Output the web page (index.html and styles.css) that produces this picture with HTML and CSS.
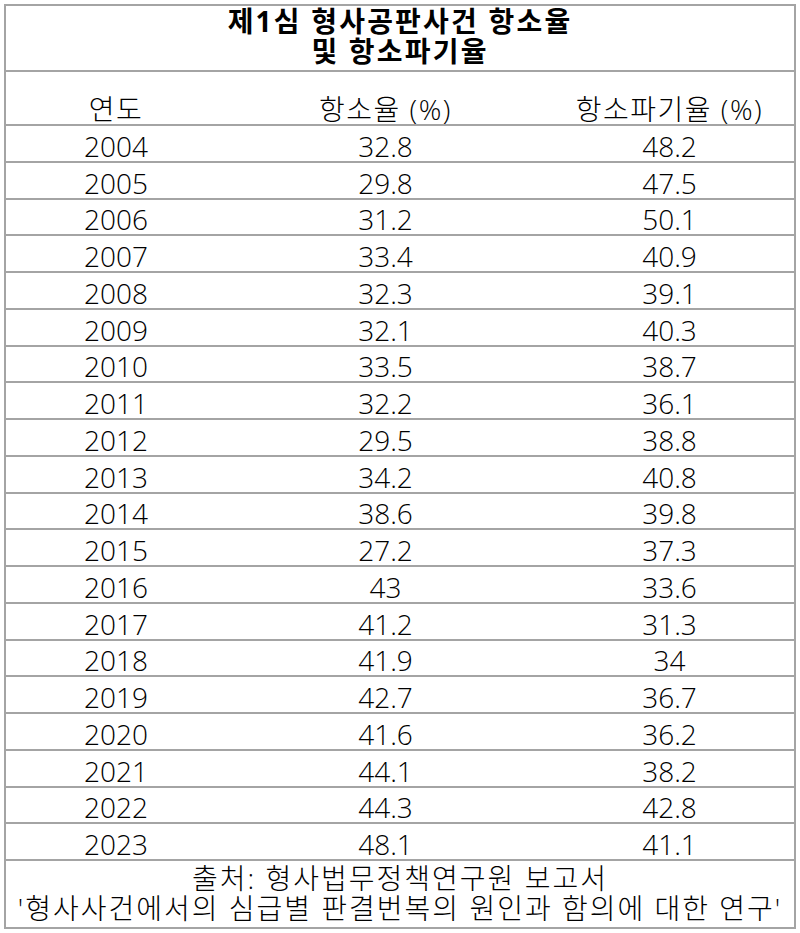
FILE: index.html
```html
<!DOCTYPE html>
<html lang="ko">
<head>
<meta charset="utf-8">
<title>제1심 형사공판사건 항소율 및 항소파기율</title>
<link rel="stylesheet" href="styles.css">
</head>
<body>
<div class="sheet">
  <div class="title">제1심 형사공판사건 항소율<br>및 항소파기율</div>
  <div class="row head"><span class="c1">연도</span><span class="c2">항소율 (%)</span><span class="c3">항소파기율 (%)</span></div>
  <div class="row"><span class="c1">2004</span><span class="c2">32.8</span><span class="c3">48.2</span></div>
  <div class="row"><span class="c1">2005</span><span class="c2">29.8</span><span class="c3">47.5</span></div>
  <div class="row"><span class="c1">2006</span><span class="c2">31.2</span><span class="c3">50.1</span></div>
  <div class="row"><span class="c1">2007</span><span class="c2">33.4</span><span class="c3">40.9</span></div>
  <div class="row"><span class="c1">2008</span><span class="c2">32.3</span><span class="c3">39.1</span></div>
  <div class="row"><span class="c1">2009</span><span class="c2">32.1</span><span class="c3">40.3</span></div>
  <div class="row"><span class="c1">2010</span><span class="c2">33.5</span><span class="c3">38.7</span></div>
  <div class="row"><span class="c1">2011</span><span class="c2">32.2</span><span class="c3">36.1</span></div>
  <div class="row"><span class="c1">2012</span><span class="c2">29.5</span><span class="c3">38.8</span></div>
  <div class="row"><span class="c1">2013</span><span class="c2">34.2</span><span class="c3">40.8</span></div>
  <div class="row"><span class="c1">2014</span><span class="c2">38.6</span><span class="c3">39.8</span></div>
  <div class="row"><span class="c1">2015</span><span class="c2">27.2</span><span class="c3">37.3</span></div>
  <div class="row"><span class="c1">2016</span><span class="c2">43</span><span class="c3">33.6</span></div>
  <div class="row"><span class="c1">2017</span><span class="c2">41.2</span><span class="c3">31.3</span></div>
  <div class="row"><span class="c1">2018</span><span class="c2">41.9</span><span class="c3">34</span></div>
  <div class="row"><span class="c1">2019</span><span class="c2">42.7</span><span class="c3">36.7</span></div>
  <div class="row"><span class="c1">2020</span><span class="c2">41.6</span><span class="c3">36.2</span></div>
  <div class="row"><span class="c1">2021</span><span class="c2">44.1</span><span class="c3">38.2</span></div>
  <div class="row"><span class="c1">2022</span><span class="c2">44.3</span><span class="c3">42.8</span></div>
  <div class="row"><span class="c1">2023</span><span class="c2">48.1</span><span class="c3">41.1</span></div>
  <div class="footer">출처: 형사법무정책연구원 보고서<br>'형사사건에서의 심급별 판결번복의 원인과 함의에 대한 연구'</div>
</div>
</body>
</html>
```
FILE: styles.css
```css
html, body {
  margin: 0;
  padding: 0;
  background: #ffffff;
}

body {
  font-family: "Open Sans", "Noto Sans", "Noto Sans CJK KR", sans-serif;
  font-size: 28px;
  font-weight: 300;
  color: #000000;
}

.sheet {
  box-sizing: border-box;
  width: 792px;
  height: 925px;
  margin: 4px;
  border: 2px solid #a4a4a4;
  display: flex;
  flex-direction: column;
}

.title {
  box-sizing: border-box;
  height: 66px;
  border-bottom: 2px solid #a4a4a4;
  text-align: center;
  font-weight: bold;
  line-height: 30px;
  letter-spacing: 2.2px;
  white-space: nowrap;
}

.row {
  box-sizing: border-box;
  height: 36.75px;
  border-bottom: 2px solid #a4a4a4;
  display: flex;
  align-items: center;
  padding-top: 5px;
  line-height: 30px;
  white-space: nowrap;
}

.row.head {
  height: 54px;
  align-items: flex-end;
  padding-top: 0;
  padding-bottom: 0;
  letter-spacing: 1.5px;
}

.c1, .c2, .c3 {
  display: block;
  text-align: center;
}

.c1 { width: 220px; flex: none; }
.c2 { width: 319px; flex: none; }
.c3 { flex: 1; }

.footer {
  flex: 1;
  text-align: center;
  line-height: 30px;
  padding-top: 2px;
  letter-spacing: 2px;
  white-space: nowrap;
}
```
